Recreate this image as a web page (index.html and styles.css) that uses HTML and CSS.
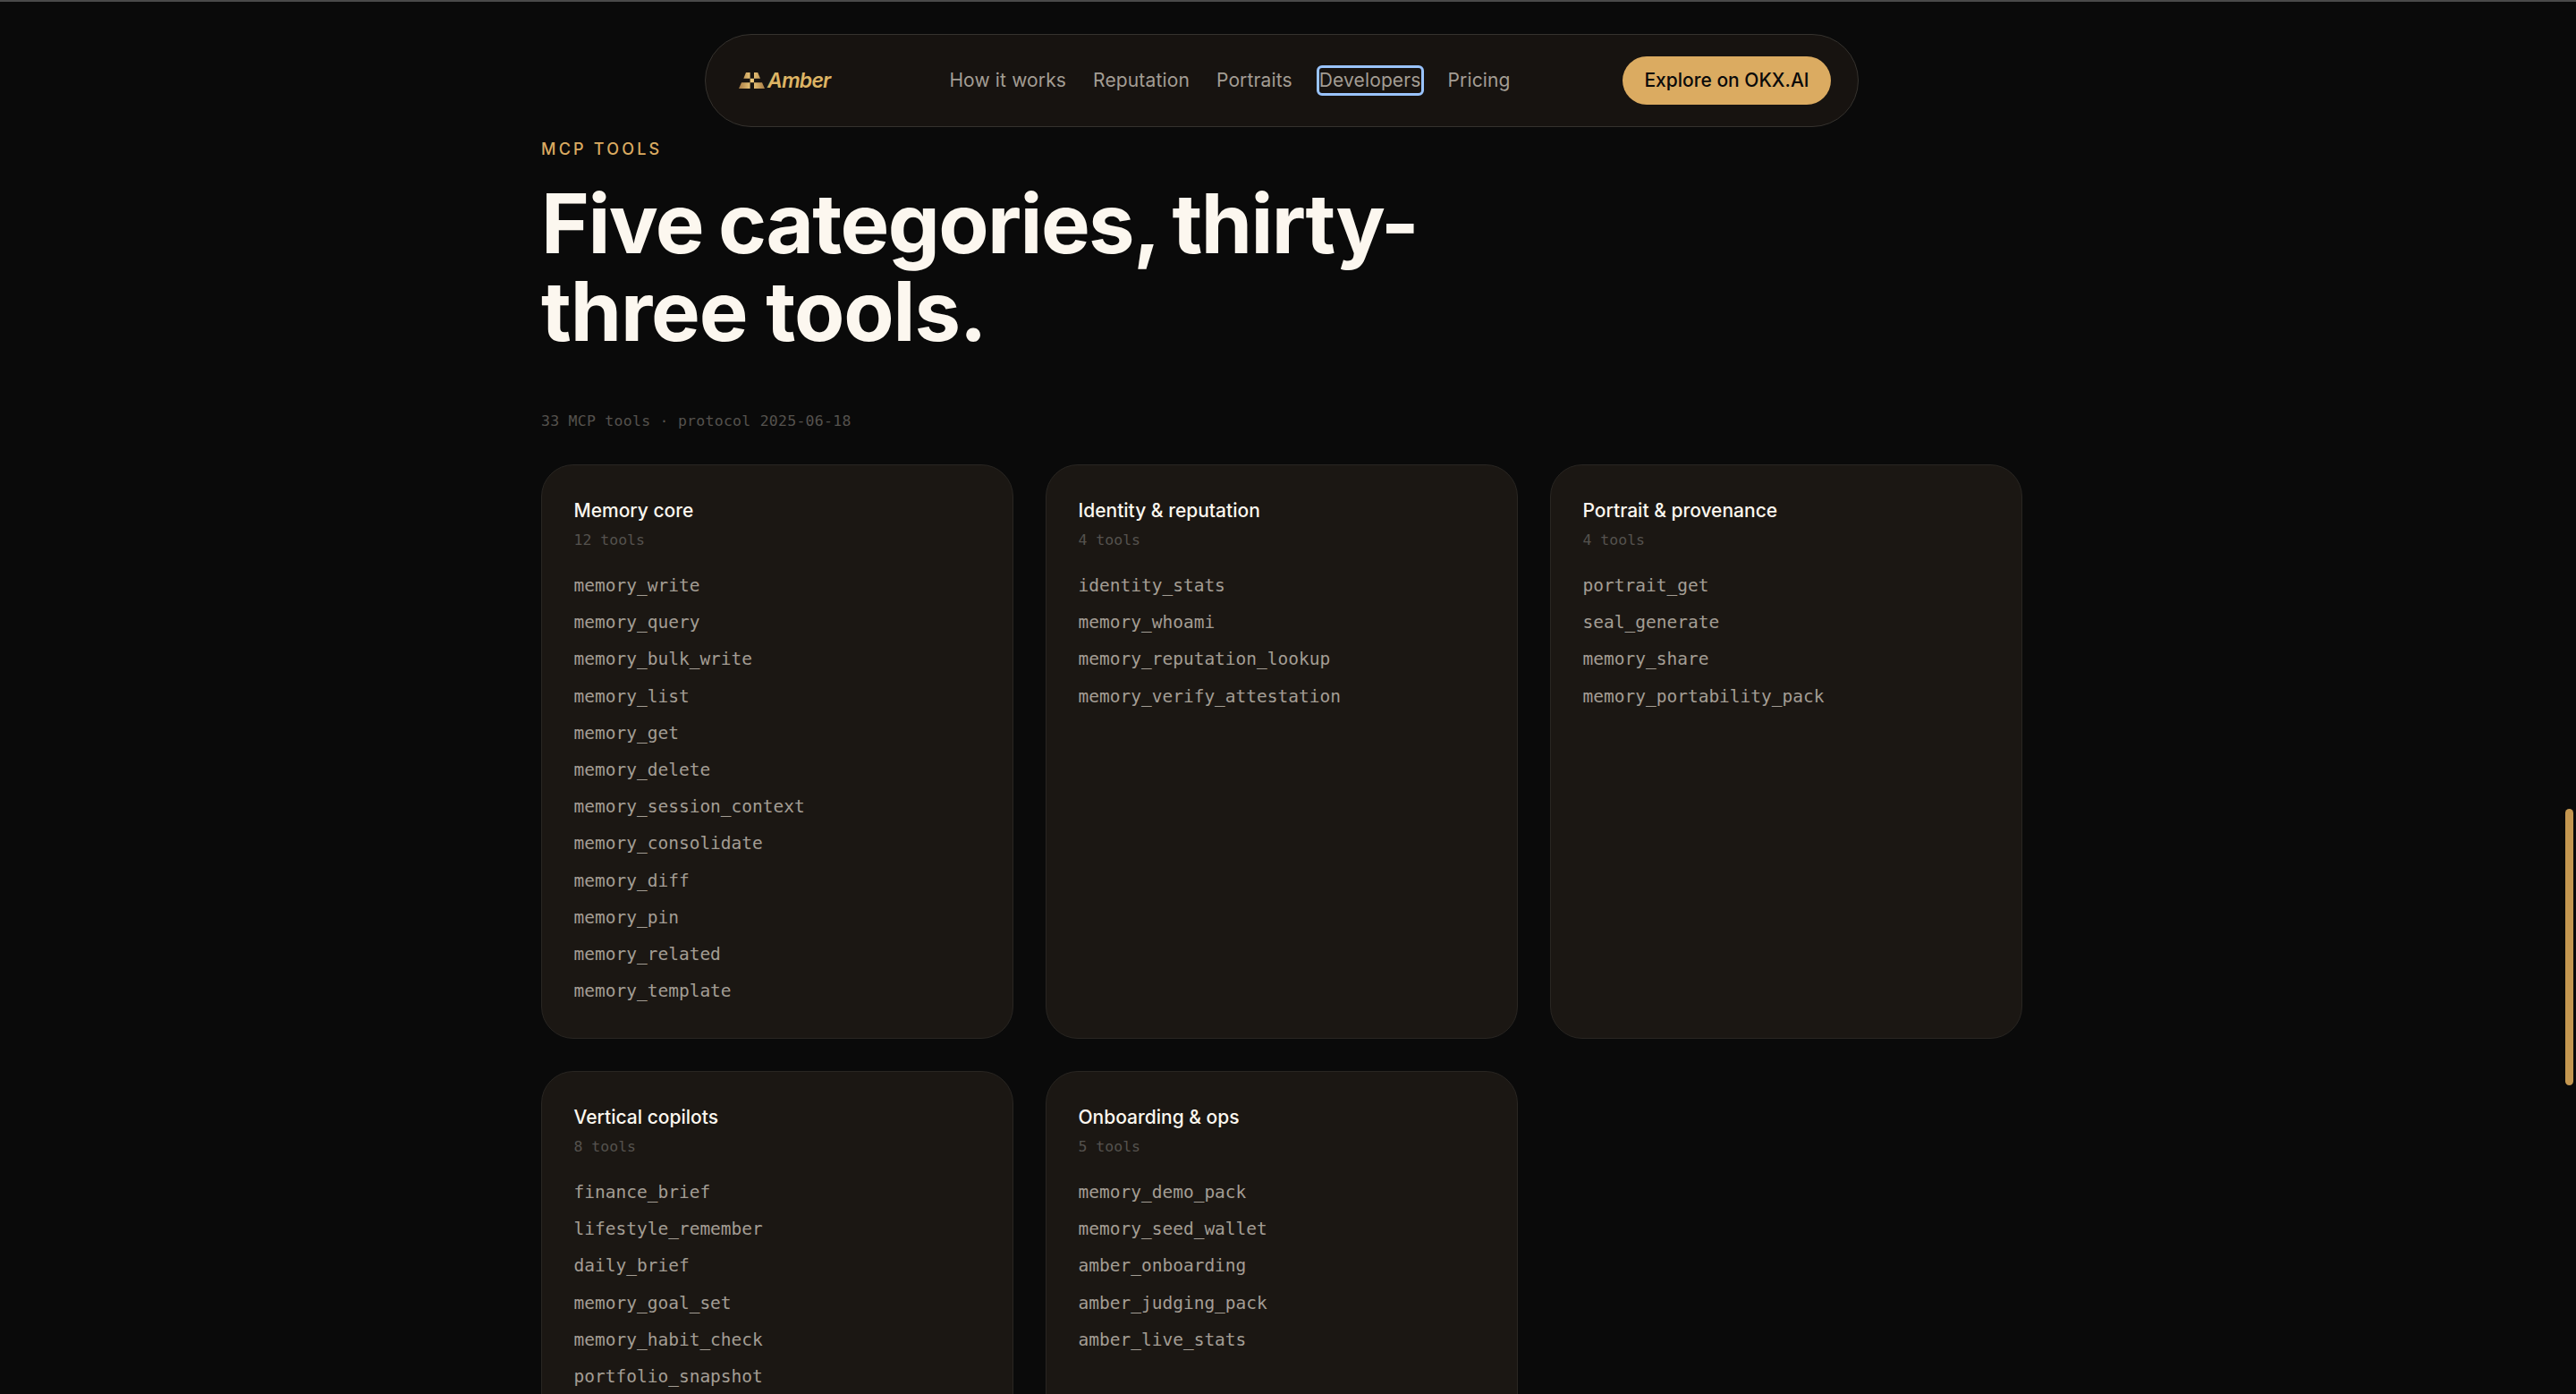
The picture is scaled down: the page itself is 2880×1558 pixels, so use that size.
FILE: index.html
```html
<!DOCTYPE html>
<html lang="en">
  <head>
    <meta charset="UTF-8" />
    <title>Amber - Developers</title>
    <link rel="stylesheet" href="styles.css" />
  </head>
  <body>
    <header class="nav">
      <a href="#" class="brand">
        <svg class="brand-mark" viewBox="0 0 29 18" fill="none">
          <defs>
            <linearGradient id="amber" x1="0" y1="18" x2="29" y2="18" gradientUnits="userSpaceOnUse">
              <stop stop-color="#a87c45" />
              <stop offset="0.5" stop-color="#efcb7c" />
              <stop offset="1" stop-color="#a87c45" />
            </linearGradient>
          </defs>
          <path
            d="M8 0H12.6V6.7H5.3ZM17 0H21.2L24 6.7H17ZM12.6 6.7H17V11.3H12.6ZM3 11.3H12.6V18H0ZM17 11.3H26L29 18H17Z"
            fill="url(#amber)"
          />
        </svg>
        <span class="brand-name">Amber</span>
      </a>
      <nav class="nav-links">
        <a href="#">How it works</a>
        <a href="#">Reputation</a>
        <a href="#">Portraits</a>
        <a href="#" class="focused">Developers</a>
        <a href="#">Pricing</a>
      </nav>
      <a href="#" class="nav-cta">Explore on OKX.AI</a>
    </header>

    <main class="tools">
      <p class="eyebrow">MCP TOOLS</p>
      <h2 class="title">
        <span class="title-first">Five categories, thirty-</span><br />
        <span class="title-second">three tools.</span>
      </h2>
      <p class="meta">33 MCP tools · protocol 2025-06-18</p>

      <div class="grid">
        <article class="card">
          <h3>Memory core</h3>
          <p class="count">12 tools</p>
          <ul>
            <li>memory_write</li>
            <li>memory_query</li>
            <li>memory_bulk_write</li>
            <li>memory_list</li>
            <li>memory_get</li>
            <li>memory_delete</li>
            <li>memory_session_context</li>
            <li>memory_consolidate</li>
            <li>memory_diff</li>
            <li>memory_pin</li>
            <li>memory_related</li>
            <li>memory_template</li>
          </ul>
        </article>
        <article class="card">
          <h3>Identity &amp; reputation</h3>
          <p class="count">4 tools</p>
          <ul>
            <li>identity_stats</li>
            <li>memory_whoami</li>
            <li>memory_reputation_lookup</li>
            <li>memory_verify_attestation</li>
          </ul>
        </article>
        <article class="card">
          <h3>Portrait &amp; provenance</h3>
          <p class="count">4 tools</p>
          <ul>
            <li>portrait_get</li>
            <li>seal_generate</li>
            <li>memory_share</li>
            <li>memory_portability_pack</li>
          </ul>
        </article>
        <article class="card">
          <h3>Vertical copilots</h3>
          <p class="count">8 tools</p>
          <ul>
            <li>finance_brief</li>
            <li>lifestyle_remember</li>
            <li>daily_brief</li>
            <li>memory_goal_set</li>
            <li>memory_habit_check</li>
            <li>portfolio_snapshot</li>
          </ul>
        </article>
        <article class="card">
          <h3>Onboarding &amp; ops</h3>
          <p class="count">5 tools</p>
          <ul>
            <li>memory_demo_pack</li>
            <li>memory_seed_wallet</li>
            <li>amber_onboarding</li>
            <li>amber_judging_pack</li>
            <li>amber_live_stats</li>
          </ul>
        </article>
      </div>
    </main>

    <div class="scroll-thumb"></div>
  </body>
</html>
```
FILE: styles.css
```css
:root {
  --bg: #0a0a0a;
  --card: #1b1713;
  --card-border: #292622;
  --nav-bg: #171310;
  --nav-border: #35322e;
  --amber: #dbab61;
  --cream: #fcf7ef;
  --muted: #a39d94;
  --dim: #55524e;
  --focus: #99c3fd;
  --sans: Inter, "Liberation Sans", sans-serif;
  --mono: "DejaVu Sans Mono", "Liberation Mono", monospace;
}

* {
  margin: 0;
  padding: 0;
  box-sizing: border-box;
}

html {
  height: 100%;
  overflow: hidden;
}

body {
  height: 100%;
  overflow: hidden;
  padding-right: 14px;
  border-top: 2px solid #4a4a4a;
  background: var(--bg);
  color: var(--cream);
  font-family: var(--sans);
  line-height: 1.65;
}

a {
  color: inherit;
  text-decoration: none;
}

/* Nav */
.nav {
  display: flex;
  align-items: center;
  justify-content: space-between;
  width: 1290px;
  height: 104px;
  margin: 36px auto 0;
  padding: 0 30px 0 37px;
  background: var(--nav-bg);
  border: 1px solid var(--nav-border);
  border-radius: 52px;
}

.brand {
  display: flex;
  align-items: center;
  gap: 3px;
  width: 110px;
}

.brand-mark {
  flex-shrink: 0;
  width: 29px;
  height: 18px;
}

.brand-name {
  color: #ddb464;
  font-size: 23px;
  font-style: italic;
  font-weight: 600;
  letter-spacing: -0.8px;
  line-height: 1;
}

.nav-links {
  display: flex;
  gap: 30px;
  color: var(--muted);
  font-size: 21px;
  letter-spacing: 0.14px;
  line-height: 28px;
}

.focused {
  border-radius: 3px;
  outline: 3px solid var(--focus);
}

.nav-cta {
  width: 233px;
  height: 54px;
  border-radius: 27px;
  background: var(--amber);
  color: #0a0a0a;
  font-size: 21px;
  font-weight: 500;
  line-height: 54px;
  text-align: center;
}

/* Tools section */
.tools {
  width: 1656px;
  margin: 10px auto 0;
}

.eyebrow {
  color: var(--amber);
  font-size: 18px;
  font-weight: 500;
  letter-spacing: 3.2px;
  line-height: 30px;
}

.title {
  margin-top: 19px;
  font-size: 92px;
  font-weight: 700;
  line-height: 98px;
  white-space: nowrap;
}

.title-first {
  letter-spacing: -1.6px;
  word-spacing: -3px;
}

.title-second {
  letter-spacing: -1.1px;
}

.meta {
  margin-top: 60px;
  color: var(--dim);
  font-family: var(--mono);
  font-size: 16.5px;
  letter-spacing: 0.26px;
  line-height: 27px;
}

.grid {
  display: grid;
  grid-template-columns: repeat(3, 1fr);
  gap: 36px;
  margin-top: 35px;
}

.card {
  min-height: 642px;
  padding: 34px 35.5px 35px;
  background: var(--card);
  border: 1px solid var(--card-border);
  border-radius: 36px;
}

.card h3 {
  font-size: 21px;
  font-weight: 500;
  line-height: 34px;
}

.count {
  color: var(--dim);
  font-family: var(--mono);
  font-size: 16.5px;
  line-height: 27px;
  margin: 2px 0 22px;
}

.card ul {
  list-style: none;
}

.card li {
  color: var(--muted);
  font-family: var(--mono);
  font-size: 19.5px;
  line-height: 32.2px;
}

.card li + li {
  margin-top: 9px;
}

/* Page scrollbar */
.scroll-thumb {
  position: fixed;
  top: 904px;
  right: 3px;
  width: 9px;
  height: 309px;
  border-radius: 5px;
  background: #c49750;
}
```
